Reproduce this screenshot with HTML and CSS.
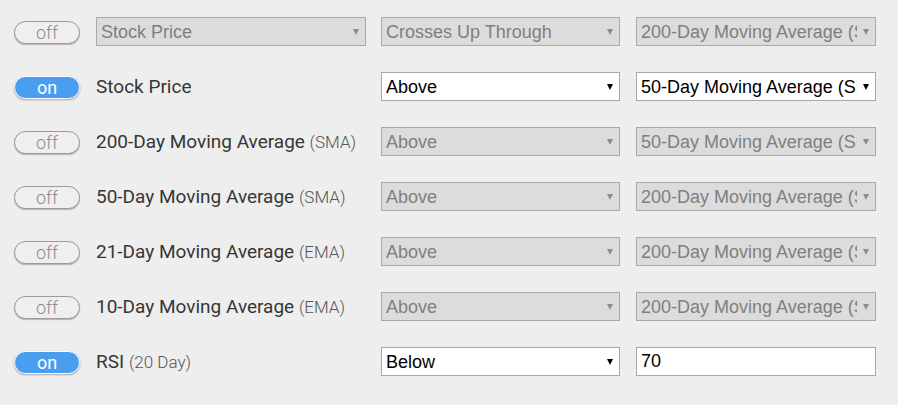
FILE: index.html
```html
<!DOCTYPE html>
<html>
<head>
<meta charset="utf-8">
<link rel="stylesheet" href="styles.css">
</head>
<body>
<div class="rules">
  <div class="toggle off">off</div>
  <div class="sel wide disabled"><select disabled><option>Stock Price</option></select></div>
  <div class="sel disabled"><select disabled><option>Crosses Up Through</option></select></div>
  <div class="sel disabled"><select disabled><option>200-Day Moving Average (SMA)</option></select></div>

  <div class="toggle on">on</div>
  <div class="label">Stock Price</div>
  <div class="sel"><select><option>Above</option></select></div>
  <div class="sel"><select><option>50-Day Moving Average (SMA)</option></select></div>

  <div class="toggle off">off</div>
  <div class="label">200-Day Moving Average <span class="sub">(SMA)</span></div>
  <div class="sel disabled"><select disabled><option>Above</option></select></div>
  <div class="sel disabled"><select disabled><option>50-Day Moving Average (SMA)</option></select></div>

  <div class="toggle off">off</div>
  <div class="label">50-Day Moving Average <span class="sub">(SMA)</span></div>
  <div class="sel disabled"><select disabled><option>Above</option></select></div>
  <div class="sel disabled"><select disabled><option>200-Day Moving Average (SMA)</option></select></div>

  <div class="toggle off">off</div>
  <div class="label">21-Day Moving Average <span class="sub">(EMA)</span></div>
  <div class="sel disabled"><select disabled><option>Above</option></select></div>
  <div class="sel disabled"><select disabled><option>200-Day Moving Average (SMA)</option></select></div>

  <div class="toggle off">off</div>
  <div class="label">10-Day Moving Average <span class="sub">(EMA)</span></div>
  <div class="sel disabled"><select disabled><option>Above</option></select></div>
  <div class="sel disabled"><select disabled><option>200-Day Moving Average (SMA)</option></select></div>

  <div class="toggle on">on</div>
  <div class="label">RSI <span class="sub">(20 Day)</span></div>
  <div class="sel"><select><option>Below</option></select></div>
  <input class="num" type="text" value="70">
</div>
</body>
</html>
```

FILE: styles.css
```css
html, body {
  margin: 0;
  padding: 0;
  background: #eeeeee;
}

.rules {
  display: grid;
  grid-template-columns: 66px 269px 239px 240px;
  grid-auto-rows: 29px;
  column-gap: 16px;
  row-gap: 26px;
  padding: 17px 0 0 14px;
  align-items: center;
}

.toggle {
  box-sizing: border-box;
  width: 66px;
  height: 23px;
  margin-top: 2px;
  border-radius: 12px;
  font-family: Roboto, "Liberation Sans", sans-serif;
  font-size: 18px;
  font-weight: 300;
  line-height: 21px;
  text-align: center;
}

.toggle.off {
  border: 1px solid #9a9a9a;
  color: #8c8c8c;
  background: #efefef;
  box-shadow: 0 1px 1px rgba(0, 0, 0, 0.25);
}

.toggle.on {
  border: 1px solid #ffffff;
  color: #ffffff;
  background: #4a9eef;
  font-weight: 400;
  box-shadow: 0 1px 2px rgba(0, 0, 0, 0.3);
}

.label {
  font-family: Roboto, "Liberation Sans", sans-serif;
  font-size: 19px;
  color: #363636;
  white-space: nowrap;
}

.sub {
  font-size: 17px;
  font-weight: 300;
  color: #555555;
}

.sel {
  position: relative;
  height: 29px;
}

.sel.wide {
  margin-right: -1px;
}

.sel select {
  -webkit-appearance: none;
  appearance: none;
  box-sizing: border-box;
  width: 100%;
  height: 29px;
  margin: 0;
  padding: 0 18px 0 4px;
  border: 1px solid #a9a9a9;
  border-radius: 0;
  background: #ffffff;
  color: #000000;
  font-family: "Liberation Sans", Arial, sans-serif;
  font-size: 18px;
  outline: none;
}

.sel.disabled select {
  background: #dcdcdc;
  color: #7f7f7f;
  opacity: 1;
}

.sel::after {
  content: "";
  position: absolute;
  right: 7px;
  top: 12px;
  border-left: 3px solid transparent;
  border-right: 3px solid transparent;
  border-top: 6px solid #000000;
  pointer-events: none;
}

.sel.disabled::after {
  border-top-color: #8a8a8a;
}

.num {
  box-sizing: border-box;
  width: 240px;
  height: 29px;
  margin: 0;
  padding: 0 4px;
  border: 1px solid #a9a9a9;
  border-radius: 0;
  background: #ffffff;
  color: #000000;
  font-family: "Liberation Sans", Arial, sans-serif;
  font-size: 18px;
  outline: none;
}
```
